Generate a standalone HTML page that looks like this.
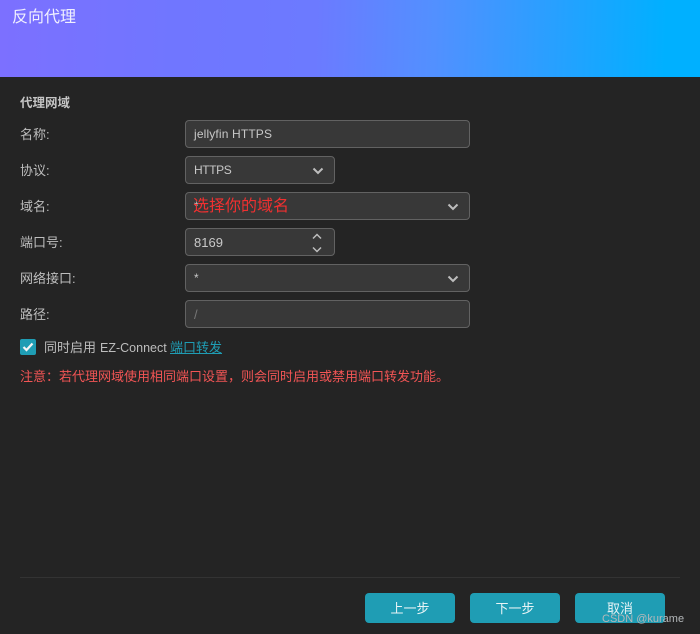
<!DOCTYPE html>
<html lang="zh">
<head>
<meta charset="utf-8">
<style>
html,body{margin:0;padding:0;}
body{width:700px;height:634px;overflow:hidden;background:#242424;position:relative;font-family:"Liberation Sans","Noto Sans CJK SC",sans-serif;font-size:13px;color:#c4c4c4;}
.a{position:absolute;white-space:nowrap;}
.hdr{left:0;top:0;width:700px;height:77px;background:linear-gradient(92deg,#7c70ff 0%,#7076ff 25%,#6c7aff 45%,#5290ff 62%,#2a9fff 78%,#00b0ff 95%,#00b0ff 100%);}
.lbl{left:20px;line-height:16px;font-size:13px;color:#bdbdbd;}
.box{left:185px;height:26px;background:#383838;border:1px solid #626262;border-radius:4px;line-height:27px;color:#c8c8c8;font-size:12px;}
.box span{position:absolute;left:8px;top:0;}
.btn{top:593px;width:90px;height:30px;background:#1f9db4;border-radius:4px;color:#e8f4f6;text-align:center;line-height:31px;font-size:13px;}
svg{position:absolute;fill:none;stroke:#bdbdbd;stroke-width:2;}
</style>
</head>
<body>
<div class="a hdr"></div>
<div class="a" style="left:12px;top:7px;font-size:16px;line-height:21px;color:#f0f0ff;">反向代理</div>

<div class="a" style="left:20px;top:95px;font-size:12.5px;line-height:16px;font-weight:bold;color:#c4c4c4;">代理网域</div>

<div class="a lbl" style="top:127px;">名称:</div>
<div class="a box" style="top:120px;width:283px;"><span style="letter-spacing:.15px;">jellyfin HTTPS</span></div>

<div class="a lbl" style="top:163px;">协议:</div>
<div class="a box" style="top:156px;width:148px;"><span style="letter-spacing:-.4px;">HTTPS</span>
<svg style="left:126px;top:10px" width="12" height="8" viewBox="0 0 12 8"><path d="M1.5 1.5L6 6L10.5 1.5"/></svg></div>

<div class="a lbl" style="top:199px;">域名:</div>
<div class="a box" style="top:192px;width:283px;"><span>*</span>
<svg style="left:261px;top:10px" width="12" height="8" viewBox="0 0 12 8"><path d="M1.5 1.5L6 6L10.5 1.5"/></svg></div>
<div class="a" style="left:193px;top:196px;font-size:16px;line-height:21px;color:#f03030;">选择你的域名</div>

<div class="a lbl" style="top:235px;">端口号:</div>
<div class="a box" style="top:228px;width:148px;"><span style="font-size:13px;">8169</span>
<svg style="left:126px;top:4px" width="10" height="7" viewBox="0 0 10 7"><path d="M1 5.5L5 1.5L9 5.5" style="stroke-width:1.5"/></svg>
<svg style="left:126px;top:17px" width="10" height="7" viewBox="0 0 10 7"><path d="M1 1.5L5 5.5L9 1.5" style="stroke-width:1.5"/></svg></div>

<div class="a lbl" style="top:271px;">网络接口:</div>
<div class="a box" style="top:264px;width:283px;"><span>*</span>
<svg style="left:261px;top:10px" width="12" height="8" viewBox="0 0 12 8"><path d="M1.5 1.5L6 6L10.5 1.5"/></svg></div>

<div class="a lbl" style="top:307px;">路径:</div>
<div class="a box" style="top:300px;width:283px;"><span style="color:#777;font-size:13px;">/</span></div>

<div class="a" style="left:20px;top:339px;width:16px;height:16px;background:#1f9db4;border-radius:2px;">
<svg style="left:2px;top:3px" width="12" height="10" viewBox="0 0 12 10"><path d="M1.5 5L4.5 8L10.5 1.5" style="stroke:#f4f4f4;stroke-width:2.2"/></svg></div>
<div class="a" style="left:44px;top:340px;line-height:16px;color:#bdbdbd;font-size:13px;">同时启用</div>
<div class="a" style="left:100px;top:340px;line-height:16px;color:#bdbdbd;font-size:12.5px;">EZ-Connect</div>
<div class="a" style="left:170px;top:340px;line-height:16px;font-size:13px;color:#1f9db4;text-decoration:underline;">端口转发</div>

<div class="a" style="left:20px;top:369px;line-height:16px;font-size:13px;color:#f25555;">注意：若代理网域使用相同端口设置，则会同时启用或禁用端口转发功能。</div>

<div class="a" style="left:20px;top:577px;width:660px;height:1px;background:#333;"></div>
<div class="a btn" style="left:365px;">上一步</div>
<div class="a btn" style="left:470px;">下一步</div>
<div class="a btn" style="left:575px;">取消</div>
<div class="a" style="left:602px;top:611px;font-size:11px;line-height:16px;color:#b4b8ba;">CSDN @kurame</div>
</body>
</html>
